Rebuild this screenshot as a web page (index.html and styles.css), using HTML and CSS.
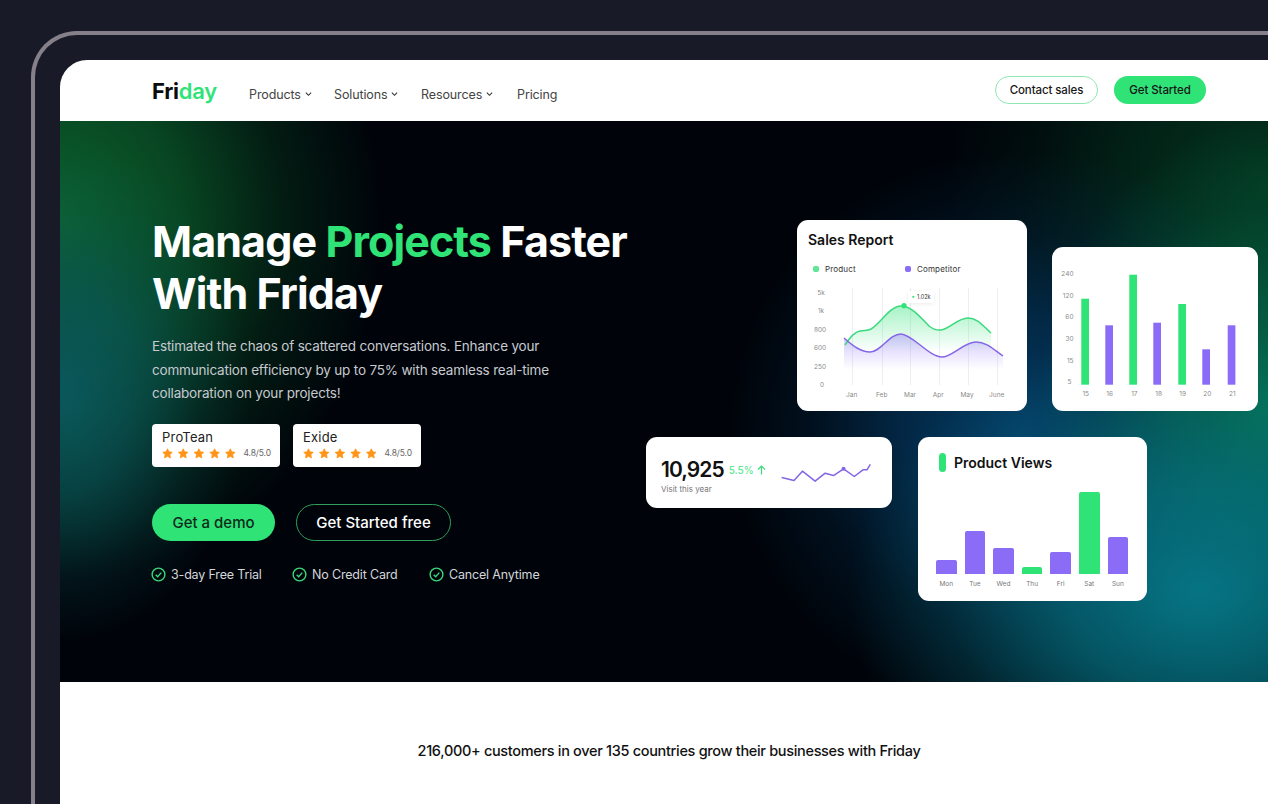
FILE: index.html
```html
<!DOCTYPE html>
<html lang="en">
<head>
  <meta charset="UTF-8">
  <meta name="viewport" content="width=device-width, initial-scale=1.0">
  <title>Friday</title>
  <link rel="stylesheet" href="styles.css">
</head>
<body>
  <div class="device">
    <div class="screen">
      <header class="nav">
        <a class="logo">Fri<span>day</span></a>
        <nav class="nav-links">
          <a class="nav-products">Products <svg class="caret" viewBox="0 0 8 6"><path d="M1 1.5l3 3 3-3"/></svg></a>
          <a class="nav-solutions">Solutions <svg class="caret" viewBox="0 0 8 6"><path d="M1 1.5l3 3 3-3"/></svg></a>
          <a class="nav-resources">Resources <svg class="caret" viewBox="0 0 8 6"><path d="M1 1.5l3 3 3-3"/></svg></a>
          <a>Pricing</a>
        </nav>
        <div class="nav-actions">
          <button class="nav-btn nav-btn-outline">Contact sales</button>
          <button class="nav-btn nav-btn-solid">Get Started</button>
        </div>
      </header>

      <section class="hero">
        <div class="hero-copy">
          <h1>Manage <span>Projects</span> Faster<br>With Friday</h1>
          <p class="lead">Estimated the chaos of scattered conversations. Enhance your<br>communication efficiency by up to 75% with seamless real-time<br>collaboration on your projects!</p>

          <div class="ratings">
            <div class="rating">
              <div class="rating-name">ProTean</div>
              <div class="rating-row">
                <svg class="stars" viewBox="0 0 74 11"><use href="#star" x="0"/><use href="#star" x="15.7"/><use href="#star" x="31.4"/><use href="#star" x="47.1"/><use href="#star" x="62.8"/></svg>
                <span>4.8/5.0</span>
              </div>
            </div>
            <div class="rating">
              <div class="rating-name">Exide</div>
              <div class="rating-row">
                <svg class="stars" viewBox="0 0 74 11"><use href="#star" x="0"/><use href="#star" x="15.7"/><use href="#star" x="31.4"/><use href="#star" x="47.1"/><use href="#star" x="62.8"/></svg>
                <span>4.8/5.0</span>
              </div>
            </div>
          </div>

          <div class="cta">
            <button class="btn btn-solid">Get a demo</button>
            <button class="btn btn-outline">Get Started free</button>
          </div>

          <ul class="perks">
            <li><svg class="check" viewBox="0 0 16 16"><circle cx="8" cy="8" r="6.8"/><path d="M5 8.2l2.1 2.1L11 6"/></svg>3-day Free Trial</li>
            <li><svg class="check" viewBox="0 0 16 16"><circle cx="8" cy="8" r="6.8"/><path d="M5 8.2l2.1 2.1L11 6"/></svg>No Credit Card</li>
            <li><svg class="check" viewBox="0 0 16 16"><circle cx="8" cy="8" r="6.8"/><path d="M5 8.2l2.1 2.1L11 6"/></svg>Cancel Anytime</li>
          </ul>
        </div>

        <div class="hero-cards">
          <div class="cards-row cards-top">
            <div class="card sales">
              <h3>Sales Report</h3>
              <div class="legend">
                <span class="legend-item"><i class="dot dot-green"></i>Product</span>
                <span class="legend-item"><i class="dot dot-purple"></i>Competitor</span>
              </div>
              <svg class="sales-chart" viewBox="0 62 230 129">
                <defs>
                  <linearGradient id="fade-green" x1="0" y1="0" x2="0" y2="1"><stop offset="0" stop-color="#2fe377" stop-opacity=".42"/><stop offset="1" stop-color="#2fe377" stop-opacity="0"/></linearGradient>
                  <linearGradient id="fade-purple" x1="0" y1="0" x2="0" y2="1"><stop offset="0" stop-color="#8b6cf6" stop-opacity=".38"/><stop offset="1" stop-color="#8b6cf6" stop-opacity="0"/></linearGradient>
                </defs>
                <g class="grid-lines">
                  <path d="M55.5 68v97M85.5 68v97M113.5 68v97M142.5 68v97M171.5 68v97M200.5 68v97"/>
                </g>
                <path fill="url(#fade-green)" d="M48 125C53 117 58 112 63 111C68 110 70 111 74 109C83 104 93 86 104 86C115 86 124 98 132 106C137 110 140 110.5 144 110C152 109 161 98 171 98C181 98 186 106 194 113V132H48Z"/>
                <path fill="url(#fade-purple)" d="M47 118C56 126 64 132 73 132C84 132 92 114 104 114C115 114 132 137 145 137C155 137 167 122 179 122C190 122 197 130 206 136V150H47Z"/>
                <path class="line line-green" d="M48 125C53 117 58 112 63 111C68 110 70 111 74 109C83 104 93 86 104 86C115 86 124 98 132 106C137 110 140 110.5 144 110C152 109 161 98 171 98C181 98 186 106 194 113"/>
                <path class="line line-purple" d="M47 118C56 126 64 132 73 132C84 132 92 114 104 114C115 114 132 137 145 137C155 137 167 122 179 122C190 122 197 130 206 136"/>
                <circle cx="107" cy="85.7" r="2.6" fill="#2fe377"/>
                <rect x="111" y="71" width="26" height="12" rx="2" fill="#fff" class="tip"/>
                <circle cx="116.3" cy="76.8" r="1.1" fill="#2fe377"/>
                <text x="120" y="78.8" class="tip-text">1.02k</text>
                <g class="axis" text-anchor="middle">
                  <text x="24" y="74.5">5k</text><text x="24" y="93">1k</text><text x="23" y="112">800</text><text x="23" y="130">600</text><text x="23" y="149">250</text><text x="25" y="167">0</text>
                  <text x="54.7" y="176.5">Jan</text><text x="84.7" y="176.5">Feb</text><text x="113" y="176.5">Mar</text><text x="141.3" y="176.5">Apr</text><text x="170" y="176.5">May</text><text x="199.7" y="176.5">June</text>
                </g>
              </svg>
            </div>

            <div class="card weekly">
              <svg class="weekly-chart" viewBox="0 0 206 164">
                <g fill="#2fe377">
                  <rect x="29.3" y="51.7" width="7.7" height="86"/>
                  <rect x="77.3" y="27.7" width="7.7" height="110"/>
                  <rect x="126.3" y="57" width="7.7" height="80.7"/>
                </g>
                <g fill="#8b6cf6">
                  <rect x="53.3" y="78.3" width="7.7" height="59.4"/>
                  <rect x="101.3" y="75.7" width="7.7" height="62"/>
                  <rect x="150.3" y="102.3" width="7.7" height="35.4"/>
                  <rect x="175.7" y="78.3" width="7.7" height="59.4"/>
                </g>
                <g class="axis" text-anchor="end">
                  <text x="21.5" y="29">240</text><text x="21.5" y="50.7">120</text><text x="21.5" y="72.3">60</text><text x="21.5" y="94">30</text><text x="21.5" y="115.7">15</text><text x="19.5" y="137.3">5</text>
                </g>
                <g class="axis" text-anchor="middle">
                  <text x="33.7" y="148.5">15</text><text x="57.7" y="148.5">16</text><text x="82.3" y="148.5">17</text><text x="106.7" y="148.5">18</text><text x="130.7" y="148.5">19</text><text x="155.3" y="148.5">20</text><text x="180.3" y="148.5">21</text>
                </g>
              </svg>
            </div>
          </div>

          <div class="cards-row">
            <div class="card stat">
              <div class="stat-text">
                <div class="stat-main">
                  <span class="stat-num">10,925</span>
                  <span class="stat-delta">5.5%</span>
                  <svg class="stat-arrow" viewBox="0 0 9 10"><path d="M4.5 9.5V1M1 4.5L4.5 1 8 4.5"/></svg>
                </div>
                <div class="stat-label">Visit this year</div>
              </div>
              <svg class="spark" viewBox="420 95 275 65">
                <path d="M425 141L462 150L487 122L525 152L555 128L580 135L610 115L642 138L668 118L680 118L690 102"/>
                <circle cx="610" cy="115" r="6"/>
              </svg>
            </div>

            <div class="card views">
              <div class="views-head"><i class="pill"></i><h3>Product Views</h3></div>
              <div class="views-bars">
                <div class="col"><div class="bar" style="height:14px"></div><span>Mon</span></div>
                <div class="col"><div class="bar" style="height:43px"></div><span>Tue</span></div>
                <div class="col"><div class="bar" style="height:26px"></div><span>Wed</span></div>
                <div class="col"><div class="bar bar-green" style="height:7px"></div><span>Thu</span></div>
                <div class="col"><div class="bar" style="height:22px"></div><span>Fri</span></div>
                <div class="col"><div class="bar bar-green" style="height:82px"></div><span>Sat</span></div>
                <div class="col"><div class="bar" style="height:37px"></div><span>Sun</span></div>
              </div>
            </div>
          </div>
        </div>
      </section>

      <section class="customers">
        <p>216,000+ customers in over 135 countries grow their businesses with Friday</p>
      </section>
    </div>
  </div>

  <svg class="sprite" width="0" height="0">
    <defs>
      <path id="star" fill="#ff9416" stroke="#ff9416" stroke-width=".8" stroke-linejoin="round" d="M5.5.8l1.45 3.05 3.3.45-2.4 2.3.6 3.3-2.95-1.6-2.95 1.6.6-3.3L.75 4.3l3.3-.45z"/>
    </defs>
  </svg>
</body>
</html>
```

FILE: styles.css
```css
* {
  box-sizing: border-box;
}

html, body {
  height: 100%;
}

body {
  margin: 0;
  background-color: #191a27;
  font-family: 'Inter', 'Liberation Sans', sans-serif;
  overflow: hidden;
}

.sprite {
  position: absolute;
}

/* Laptop frame */
.device {
  margin: 31px 0 0 31px;
  height: 773px;
  padding: 25px 0 0 25px;
  border-top: 4px solid #858089;
  border-left: 4px solid #858089;
  border-top-left-radius: 46px;
}

.screen {
  height: 748px;
  background: #fff;
  border-top-left-radius: 27px;
  overflow: hidden;
}

/* Nav */
.nav {
  height: 61px;
  display: flex;
  align-items: center;
  padding: 0 62px 2px 92px;
}

.logo {
  font-size: 22px;
  font-weight: 700;
  color: #0b0b0b;
  letter-spacing: -.25px;
  padding-top: 2px;
}

.logo span {
  color: #2fe377;
  font-weight: 600;
}

.nav-links {
  display: flex;
  margin-left: 32px;
  padding-top: 9px;
}

.nav-links a {
  display: flex;
  align-items: center;
  gap: 4px;
  font-size: 12.5px;
  letter-spacing: -.12px;
  color: #444;
}

.nav-products {
  width: 85px;
}

.nav-solutions {
  width: 87px;
}

.nav-resources {
  width: 96px;
}

.caret {
  width: 7px;
  height: 6px;
  fill: none;
  stroke: #333;
  stroke-width: 1.2;
}

.nav-actions {
  margin-left: auto;
  display: flex;
  gap: 16px;
}

.nav-btn {
  height: 28px;
  border-radius: 14px;
  font-family: inherit;
  font-size: 11.5px;
  font-weight: 500;
  letter-spacing: -.1px;
  color: #171717;
  padding: 0;
}

.nav-btn-outline {
  width: 103px;
  background: #fff;
  border: 1.5px solid #8fe6b4;
}

.nav-btn-solid {
  width: 92px;
  background: #2fe377;
  border: none;
}

/* Hero */
.hero {
  height: 561px;
  display: flex;
  padding-top: 94px;
  color: #fff;
  background-color: #00040a;
  background-image:
    radial-gradient(ellipse 350px 270px at 1140px 470px, rgba(6, 116, 132, 1) 0%, rgba(6, 116, 132, .7) 38%, rgba(6, 116, 132, .25) 72%, rgba(6, 116, 132, 0) 100%),
    radial-gradient(ellipse 230px 290px at 1208px 290px, rgba(5, 112, 78, 1) 0%, rgba(5, 112, 78, .65) 40%, rgba(5, 112, 78, .22) 72%, rgba(5, 112, 78, 0) 100%),
    radial-gradient(ellipse 290px 280px at 960px 310px, rgba(4, 58, 100, 1) 0%, rgba(4, 58, 100, .65) 40%, rgba(4, 58, 100, .22) 72%, rgba(4, 58, 100, 0) 100%),
    radial-gradient(ellipse 320px 270px at 1208px 60px, rgba(3, 52, 30, 1) 0%, rgba(3, 52, 30, .6) 45%, rgba(3, 52, 30, .2) 75%, rgba(3, 52, 30, 0) 100%),
    radial-gradient(ellipse 190px 250px at 0 270px, rgba(10, 88, 92, 1) 0%, rgba(10, 88, 92, .65) 40%, rgba(10, 88, 92, .22) 72%, rgba(10, 88, 92, 0) 100%),
    radial-gradient(ellipse 320px 360px at 0 100px, rgba(11, 98, 44, 1) 0%, rgba(11, 98, 44, .7) 38%, rgba(11, 98, 44, .25) 70%, rgba(11, 98, 44, 0) 100%);
}

.hero-copy {
  width: 586px;
  padding-left: 92px;
  flex-shrink: 0;
}

h1 {
  margin: 0;
  font-size: 43px;
  line-height: 52px;
  font-weight: 700;
  letter-spacing: -.9px;
}

h1 span {
  color: #2fe377;
}

.lead {
  margin: 16px 0 0;
  font-size: 13.5px;
  line-height: 23.5px;
  letter-spacing: -.18px;
  color: #c7c9cf;
}

.ratings {
  display: flex;
  gap: 13px;
  margin-top: 18px;
}

.rating {
  width: 128px;
  height: 43px;
  padding: 6px 10px;
  background: #fff;
  border-radius: 4px;
  color: #222;
}

.rating-name {
  font-size: 13px;
  line-height: 15px;
  letter-spacing: .2px;
}

.rating-row {
  display: flex;
  align-items: center;
  justify-content: space-between;
  margin-top: 3px;
}

.rating-row span {
  font-size: 8.5px;
  color: #666;
  letter-spacing: -.1px;
  margin-right: -1px;
}

.stars {
  width: 74px;
  height: 11px;
}

.cta {
  display: flex;
  gap: 21px;
  margin-top: 37px;
}

.btn {
  height: 37px;
  border-radius: 19px;
  font-family: inherit;
  font-size: 15px;
  font-weight: 500;
  padding: 0 0 0;
}

.btn-solid {
  width: 123px;
  background: #2fe377;
  border: none;
  color: #0e2b1a;
}

.btn-outline {
  width: 155px;
  background: transparent;
  border: 1.5px solid #2e9e5b;
  color: #fff;
}

.perks {
  display: flex;
  margin: 26px 0 0;
  padding: 0;
  list-style: none;
  font-size: 12.5px;
  letter-spacing: -.17px;
  color: #d4d6da;
}

.perks li {
  display: flex;
  align-items: center;
  gap: 5px;
  margin-left: -1px;
}

.perks li:nth-child(1) {
  width: 142px;
}

.perks li:nth-child(2) {
  width: 138px;
}

.check {
  width: 15px;
  height: 15px;
  fill: none;
  stroke: #39d97c;
  stroke-width: 1.5;
}

/* Floating cards */
.hero-cards {
  display: flex;
  flex-direction: column;
  gap: 26px;
  padding-top: 5px;
}

.cards-row {
  display: flex;
  align-items: flex-start;
  gap: 26px;
}

.cards-top {
  align-items: flex-end;
  gap: 25px;
  padding-left: 151px;
}

.card {
  background: #fff;
  border-radius: 11px;
  color: #111;
}

.card h3 {
  margin: 0;
  font-size: 14px;
  font-weight: 600;
}

.sales {
  position: relative;
  width: 230px;
  height: 191px;
  padding-top: 12px;
}

.sales h3 {
  padding-left: 11px;
  line-height: 16px;
}

.legend {
  display: flex;
  padding: 16px 0 0 16px;
  font-size: 8px;
  line-height: 10px;
  letter-spacing: .15px;
  color: #333;
}

.legend-item {
  display: flex;
  align-items: center;
  gap: 6px;
  width: 92px;
}

.dot {
  width: 6px;
  height: 6px;
  border-radius: 2px;
}

.dot-green {
  background: #5ee796;
}

.dot-purple {
  background: #8b6cf6;
}

.sales-chart {
  position: absolute;
  left: 0;
  bottom: 0;
  width: 230px;
  height: 129px;
}

.grid-lines path {
  stroke: #eeeef2;
  stroke-width: 1;
  fill: none;
}

.line {
  fill: none;
  stroke-width: 1.5;
}

.line-green {
  stroke: #39d97c;
}

.line-purple {
  stroke: #8566e6;
}

.tip {
  filter: drop-shadow(0 1px 2px rgba(0, 0, 0, .08));
}

.tip-text {
  font-size: 5.5px;
  fill: #333;
}

.axis text {
  font-size: 6.5px;
  fill: #8a8a8a;
}

.weekly {
  width: 206px;
  height: 164px;
}

.weekly-chart {
  display: block;
  width: 206px;
  height: 164px;
}

.stat {
  width: 246px;
  height: 71px;
  display: flex;
  align-items: center;
  padding: 0 20px 0 15px;
}

.stat-text {
  padding-top: 6px;
}

.stat-main {
  display: flex;
  align-items: center;
  gap: 5px;
}

.stat-num {
  font-size: 21px;
  line-height: 26px;
  font-weight: 600;
  letter-spacing: -.95px;
}

.stat-delta {
  font-size: 10px;
  font-weight: 500;
  color: #5ee796;
}

.stat-arrow {
  width: 9px;
  height: 10px;
  margin-left: -2px;
  fill: none;
  stroke: #39d97c;
  stroke-width: 1.2;
}

.stat-label {
  font-size: 8px;
  color: #777;
  margin-top: 1px;
}

.spark {
  width: 92px;
  height: 22px;
  margin-left: auto;
}

.spark path {
  fill: none;
  stroke: #8566e6;
  stroke-width: 4.5;
  stroke-linejoin: round;
}

.spark circle {
  fill: #8566e6;
}

.views {
  width: 229px;
  height: 164px;
  padding: 16px 0 0 18px;
}

.views-head {
  display: flex;
  align-items: center;
  gap: 8px;
  padding-left: 3px;
}

.pill {
  width: 7px;
  height: 19px;
  border-radius: 4px;
  background: #2fe377;
}

.views-bars {
  display: flex;
  gap: 8px;
  height: 107px;
  margin-top: 9px;
}

.col {
  width: 20.6px;
  display: flex;
  flex-direction: column;
  justify-content: flex-end;
  align-items: center;
}

.col span {
  margin-top: 6px;
  height: 8px;
  line-height: 8px;
  font-size: 6.5px;
  color: #777;
}

.bar {
  width: 100%;
  background: #8b6cf6;
  border-radius: 2px 2px 0 0;
}

.bar-green {
  background: #2fe377;
}

/* Customers strip */
.customers {
  padding: 60px 0 0 10px;
  text-align: center;
}

.customers p {
  margin: 0;
  font-size: 14.5px;
  line-height: 18px;
  font-weight: 500;
  letter-spacing: -.32px;
  color: #111;
}
```
